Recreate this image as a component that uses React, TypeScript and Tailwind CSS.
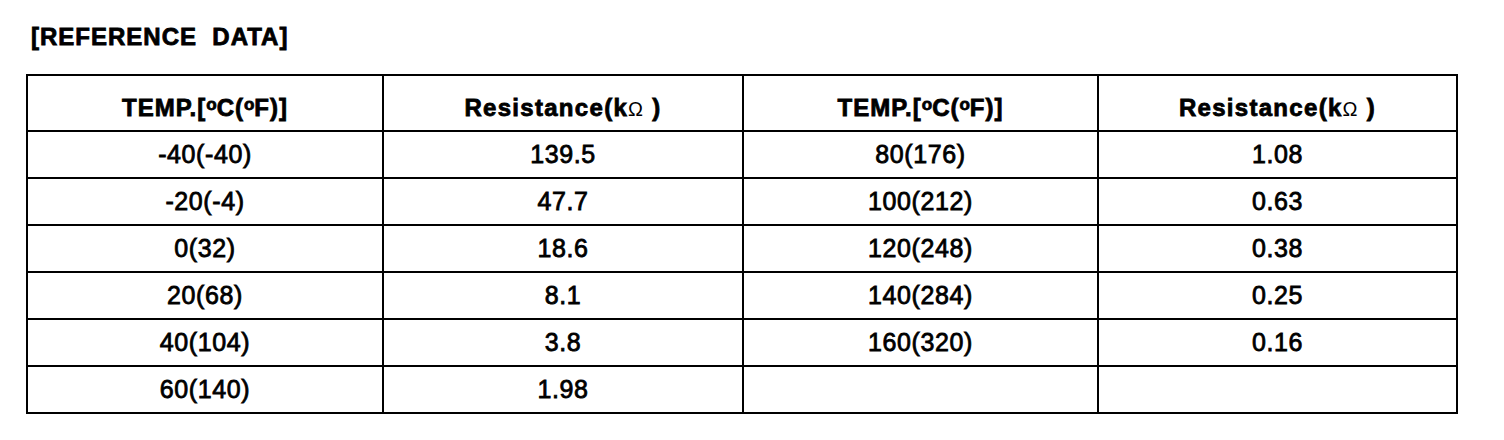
import React from "react";

const left = ["-40(-40)", "-20(-4)", "0(32)", "20(68)", "40(104)", "60(140)"];
const leftR = ["139.5", "47.7", "18.6", "8.1", "3.8", "1.98"];
const right = ["80(176)", "100(212)", "120(248)", "140(284)", "160(320)", ""];
const rightR = ["1.08", "0.63", "0.38", "0.25", "0.16", ""];

function Deg() {
  return <span className="text-[17px] leading-none align-[6px] tracking-normal">o</span>;
}

function TempHead() {
  return (
    <div className="bg-white flex items-center justify-center pt-[9px] font-bold text-[24px] leading-none tracking-[1px] [-webkit-text-stroke:0.8px_#000]">
      <span>
        TEMP.[<Deg />C(<Deg />F)]
      </span>
    </div>
  );
}

function ResHead() {
  return (
    <div className="bg-white flex items-center justify-center pt-[9px] font-bold text-[24px] leading-none tracking-[1.3px] [-webkit-text-stroke:0.8px_#000]">
      <span>
        Resistance(k<span className="font-normal text-[20px] [-webkit-text-stroke:0px_#000]">Ω</span>&nbsp;)
      </span>
    </div>
  );
}

function Cell({ v }: { v: string }) {
  return (
    <div className="bg-white flex items-center justify-center text-[25px] tracking-[0.6px] [-webkit-text-stroke:0.8px_#000]">
      {v}
    </div>
  );
}

export default function App() {
  return (
    <div
      className="w-[1504px] h-[440px] bg-white text-black overflow-hidden"
      style={{ fontFamily: '"Liberation Sans", Arial, sans-serif' }}
    >
      <div className="pl-[31px] pt-[25px] text-[24px] leading-[24px] font-bold tracking-[1px] whitespace-pre [-webkit-text-stroke:0.8px_#000]">
        [REFERENCE  DATA]
      </div>
      <div className="ml-[26px] mt-[25px] w-[1432px] bg-black p-[2px] grid grid-cols-[354px_358px_353px_357px] grid-rows-[54px_repeat(6,45px)] gap-[2px]">
        <TempHead />
        <ResHead />
        <TempHead />
        <ResHead />
        {left.map((l, i) => (
          <React.Fragment key={i}>
            <Cell v={l} />
            <Cell v={leftR[i]} />
            <Cell v={right[i]} />
            <Cell v={rightR[i]} />
          </React.Fragment>
        ))}
      </div>
    </div>
  );
}
